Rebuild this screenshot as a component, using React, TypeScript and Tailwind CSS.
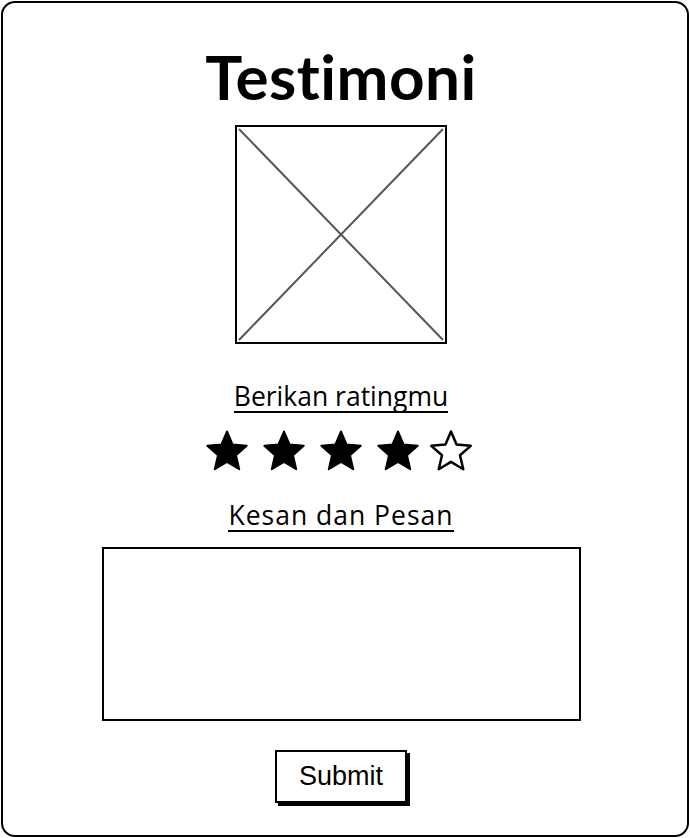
import React from "react";

function Star({ filled, className = "" }: { filled: boolean; className?: string }) {
  return (
    <svg width="46" height="46" viewBox="0 0 24 24" className={"block " + className}>
      <polygon
        points="12,1.8 14.9,8.6 22.3,9.3 16.7,14.2 18.4,21.5 12,17.7 5.6,21.5 7.3,14.2 1.7,9.3 9.1,8.6"
        fill={filled ? "#000" : "#fff"}
        stroke="#000"
        strokeWidth={filled ? 1 : 1.3}
        strokeLinejoin="round"
      />
    </svg>
  );
}

export default function App() {
  return (
    <div className="w-[690px] h-[838px] bg-white p-[1px]">
      <div className="h-[836px] border-2 border-black rounded-[14px] flex flex-col items-center bg-white pr-[8px]">
        <h1
          className="mt-[41px] text-[62px] leading-[64px] font-bold text-black tracking-[0.5px]"
          style={{ fontFamily: "Lato, 'Open Sans', sans-serif" }}
        >
          Testimoni
        </h1>
        <div className="mt-[17px] w-[212px] h-[219px] border-2 border-black relative">
          <svg className="absolute inset-0 w-full h-full" viewBox="0 0 208 215" preserveAspectRatio="none">
            <line x1="2" y1="2" x2="206" y2="213" stroke="#555" strokeWidth="2" />
            <line x1="206" y1="2" x2="2" y2="213" stroke="#555" strokeWidth="2" />
          </svg>
        </div>
        <div
          className="mt-[37px] text-[26.5px] leading-[30px] text-black border-b-2 border-black"
          style={{ fontFamily: "'Open Sans', Lato, sans-serif" }}
        >
          Berikan ratingmu
        </div>
        <div className="mt-[15px] flex items-center gap-[11px] pr-[4px]">
          <Star filled />
          <Star filled />
          <Star filled />
          <Star filled />
          <Star filled={false} className="-ml-[4px]" />
        </div>
        <div
          className="mt-[26px] text-[26.5px] leading-[30px] text-black border-b-2 border-black tracking-[1px]"
          style={{ fontFamily: "'Open Sans', Lato, sans-serif" }}
        >
          Kesan dan Pesan
        </div>
        <div className="mt-[15px] w-[479px] h-[174px] border-2 border-black" />
        <button
          className="mt-[29px] w-[132px] h-[53px] border-2 border-black bg-white text-[27px] text-black shadow-[3px_3px_0_#000] flex items-center justify-center"
          style={{ fontFamily: "'Liberation Sans', Arial, sans-serif" }}
        >
          Submit
        </button>
      </div>
    </div>
  );
}
